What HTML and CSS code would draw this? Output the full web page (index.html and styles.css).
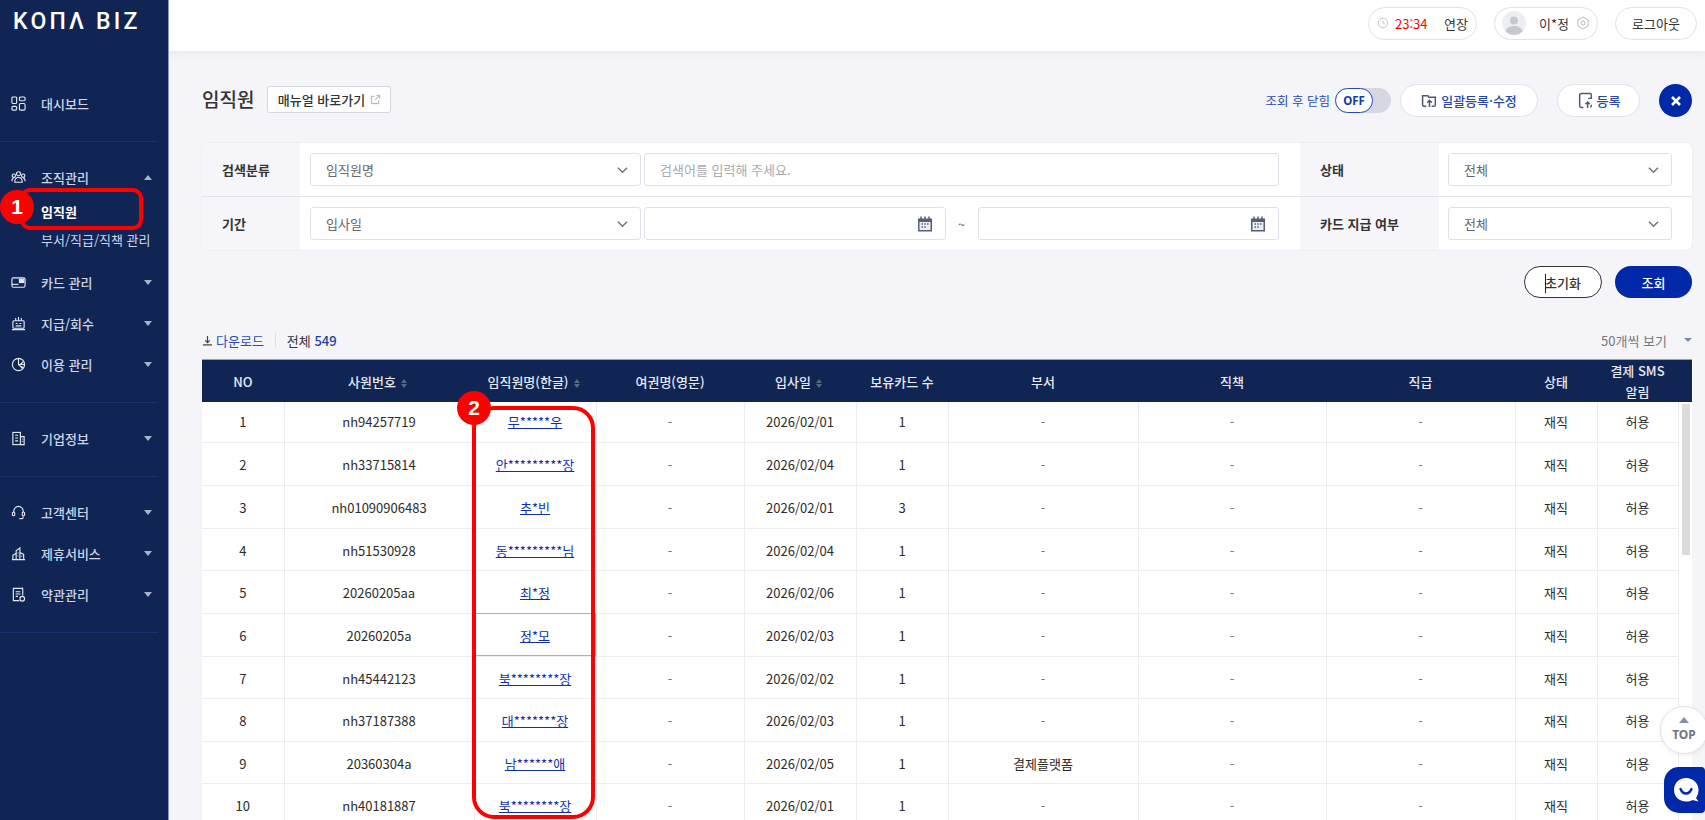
FILE: index.html
```html
<!DOCTYPE html>
<html lang="ko">
<head>
<meta charset="utf-8">
<title>KONA BIZ</title>
<link rel="stylesheet" href="styles.css">
</head>
<body>
<div class="app">
  <aside class="sidebar">
    <div class="logo">KOΠΛ BIZ</div>
    <nav>
      <ul class="group g-first">
        <li class="item"><svg class="ic" viewBox="0 0 16 16"><rect x="1" y="1" width="5" height="7" rx="1.2"/><rect x="1" y="11" width="5" height="4" rx="1.2"/><rect x="9" y="1" width="6" height="4" rx="1.2"/><rect x="9" y="8" width="6" height="7" rx="1.2"/></svg><span>대시보드</span></li>
      </ul>
      <ul class="group">
        <li class="item"><svg class="ic" viewBox="0 0 16 16"><circle cx="8" cy="4" r="2.2"/><circle cx="3" cy="6" r="1.8"/><circle cx="13" cy="6" r="1.8"/><path d="M4 13c0-3 1.5-5 4-5s4 2 4 5zM1 12c0-2 .6-3.5 2-3.5M15 12c0-2-.6-3.5-2-3.5"/></svg><span>조직관리</span><i class="tri up"></i></li>
        <li class="sub active">임직원</li>
        <li class="sub last">부서/직급/직책 관리</li>
        <li class="item"><svg class="ic" viewBox="0 0 16 16"><rect x="1" y="3" width="14" height="10" rx="1.5"/><rect x="9" y="4.500" width="4.500" height="3.500" fill="#dfe5f0"/><path d="M1 10h7"/></svg><span>카드 관리</span><i class="tri"></i></li>
        <li class="item"><svg class="ic" viewBox="0 0 16 16"><rect x="2" y="5" width="12" height="8" rx="1"/><path d="M1 14.5h14M5 2v3M8 1v4M11 2v3M5 8h2M9 8h2M5 10.500h6"/></svg><span>지급/회수</span><i class="tri"></i></li>
        <li class="item"><svg class="ic" viewBox="0 0 16 16"><circle cx="8" cy="8" r="6.5"/><path d="M8 1.5V8l4.500 4.500M8 8h6.500M10 8l3.500-3.500M10 10l3 1"/></svg><span>이용 관리</span><i class="tri"></i></li>
      </ul>
      <ul class="group">
        <li class="item"><svg class="ic" viewBox="0 0 16 16"><rect x="2" y="1.5" width="8" height="13"/><path d="M10 6h4v8.500h-4M4.500 4.500h3M4.500 7.500h3M4.500 10.500h3M11.500 8.500h1M11.500 11h1"/></svg><span>기업정보</span><i class="tri"></i></li>
      </ul>
      <ul class="group">
        <li class="item"><svg class="ic" viewBox="0 0 16 16"><path d="M3 8V6.500a5 5 0 0 1 10 0V8M13 12v1a1.500 1.500 0 0 1-1.500 1.500H9"/><rect x="1.500" y="7.500" width="2.500" height="4" rx="1.2"/><rect x="12" y="7.500" width="2.500" height="4" rx="1.2"/></svg><span>고객센터</span><i class="tri"></i></li>
        <li class="item"><svg class="ic" viewBox="0 0 16 16"><path d="M1 14.500h14M2 14.500V10l3-2M5.500 14.500V5l4-3v12.500M9.500 7l4 2v5.500M7.500 7v1M7.500 10v1M11.500 10.500v1"/></svg><span>제휴서비스</span><i class="tri"></i></li>
        <li class="item"><svg class="ic" viewBox="0 0 16 16"><path d="M9 14.500H2.500v-13h10V9M5 5h5M5 7.500h5M5 10h2.500"/><circle cx="12" cy="12.500" r="2.500"/></svg><span>약관관리</span><i class="tri"></i></li>
      </ul>
    </nav>
  </aside>

  <div class="main">
    <header class="topbar">
      <div class="pill timer">
        <svg class="clock" viewBox="0 0 12 12"><circle cx="6" cy="6" r="4.800"/><path d="M6 3.200V6l2 1.200"/></svg>
        <span class="time">23:34</span><span class="extend">연장</span>
      </div>
      <div class="pill user">
        <svg class="avatar" viewBox="0 0 24 24"><circle cx="12" cy="12" r="12" fill="#eeeef2"/><circle cx="12" cy="9.500" r="4" fill="#c6c8cf"/><path d="M3.500 20.500c1-4 4.500-5.500 8.500-5.500s7.500 1.500 8.500 5.500a12 12 0 0 1-17 0z" fill="#c6c8cf"/></svg>
        <span class="uname">이*정</span>
        <svg class="gear" viewBox="0 0 14 14"><path d="M7 1l5.200 3v6L7 13 1.800 10V4z"/><circle cx="7" cy="7" r="2"/></svg>
      </div>
      <button class="pill logout">로그아웃</button>
    </header>

    <section class="content">
      <div class="title-row">
        <h1>임직원</h1>
        <button class="manual">매뉴얼 바로가기
          <svg viewBox="0 0 12 12"><path d="M9.500 7v3.500h-8v-8H5M7 1.500h3.500V5M10.500 1.500 5.500 6.500"/></svg>
        </button>
        <div class="title-actions">
          <span class="close-label">조회 후 닫힘</span>
          <div class="toggle"><span class="knob">OFF</span></div>
          <button class="act bulk"><svg viewBox="0 0 16 16"><path class="dk" d="M5 13.500H3a1.500 1.500 0 0 1-1.500-1.500V3.500h5l1 1.500h6V12a1.500 1.500 0 0 1-1.500 1.500h-2"/><path class="dk" d="M8 14V8M5.800 10 8 7.800l2.200 2.200"/></svg>일괄등록·수정</button>
          <button class="act reg"><svg viewBox="0 0 16 16"><path class="dk" d="M6 14.500H4a1.500 1.500 0 0 1-1.500-1.500V3A1.500 1.500 0 0 1 4 1.500h8A1.500 1.500 0 0 1 13.500 3v3H10.500M13.500 12v1a1.500 1.500 0 0 1-1 1.400"/><path class="dk" d="M10 15V9.500M8 11.500l2-2 2 2"/></svg>등록</button>
          <button class="x" aria-label="닫기"><svg viewBox="0 0 12 12"><path d="M2 2l8 8M10 2l-8 8"/></svg></button>
        </div>
      </div>

      <div class="filter">
        <div class="f-label">검색분류</div>
        <div class="f-cell">
          <div class="ctl sel wide">임직원명<svg class="chev" viewBox="0 0 12 8"><path d="M1 1.500 6 6.500l5-5"/></svg></div>
          <div class="ctl ph fill">검색어를 입력해 주세요.</div>
        </div>
        <div class="f-label">상태</div>
        <div class="f-cell">
          <div class="ctl sel fill">전체<svg class="chev" viewBox="0 0 12 8"><path d="M1 1.500 6 6.500l5-5"/></svg></div>
        </div>
        <div class="f-label">기간</div>
        <div class="f-cell">
          <div class="ctl sel wide">입사일<svg class="chev" viewBox="0 0 12 8"><path d="M1 1.500 6 6.500l5-5"/></svg></div>
          <div class="ctl date"><svg class="cal" viewBox="0 0 16 16"><path d="M1 2.500h14V15.500H1z" fill="#565f73"/><path d="M4 .5v3M8 .5v3M12 .5v3" stroke="#565f73" stroke-width="1.500"/><rect x="2.500" y="6" width="11" height="8" fill="#eceef2"/><path d="M4.500 8h1.500M7.300 8h1.500M10 8h1.500M4.500 11h1.500M7.300 11h1.500" stroke="#565f73" stroke-width="1.500"/></svg></div>
          <span class="tilde">~</span>
          <div class="ctl date"><svg class="cal" viewBox="0 0 16 16"><path d="M1 2.500h14V15.500H1z" fill="#565f73"/><path d="M4 .5v3M8 .5v3M12 .5v3" stroke="#565f73" stroke-width="1.500"/><rect x="2.500" y="6" width="11" height="8" fill="#eceef2"/><path d="M4.500 8h1.500M7.300 8h1.500M10 8h1.500M4.500 11h1.500M7.300 11h1.500" stroke="#565f73" stroke-width="1.500"/></svg></div>
        </div>
        <div class="f-label">카드 지급 여부</div>
        <div class="f-cell">
          <div class="ctl sel fill">전체<svg class="chev" viewBox="0 0 12 8"><path d="M1 1.500 6 6.500l5-5"/></svg></div>
        </div>
      </div>

      <div class="search-row">
        <button class="reset">초기화<i class="ibeam"></i></button>
        <button class="search">조회</button>
      </div>

      <div class="toolbar">
        <svg class="dl" viewBox="0 0 12 12"><path d="M6 1v7M3.500 5.800 6 8.300l2.500-2.500M1 10.800h10"/></svg>
        <a class="dl-link">다운로드</a>
        <span class="sep"></span>
        <span class="total">전체 <b>549</b></span>
        <span class="per">50개씩 보기</span><i class="per-tri"></i>
      </div>

      <table class="grid">
        <colgroup><col class="c1"><col class="c2"><col class="c3"><col class="c4"><col class="c5"><col class="c6"><col class="c7"><col class="c8"><col class="c9"><col class="c10"><col class="c11"><col class="c12"></colgroup>
        <thead>
          <tr><th>NO</th><th>사원번호<i class="sort"></i></th><th>임직원명(한글)<i class="sort"></i></th><th>여권명(영문)</th><th>입사일<i class="sort"></i></th><th>보유카드 수</th><th>부서</th><th>직책</th><th>직급</th><th>상태</th><th class="two">결제 SMS<br>알림</th><th></th></tr>
        </thead>
        <tbody>
          <tr><td>1</td><td>nh94257719</td><td><a>무*****우</a></td><td class="d">-</td><td>2026/02/01</td><td>1</td><td class="d">-</td><td class="d">-</td><td class="d">-</td><td>재직</td><td>허용</td><td class="track" rowspan="10"><div class="thumb"></div></td></tr>
          <tr><td>2</td><td>nh33715814</td><td><a>안*********장</a></td><td class="d">-</td><td>2026/02/04</td><td>1</td><td class="d">-</td><td class="d">-</td><td class="d">-</td><td>재직</td><td>허용</td></tr>
          <tr><td>3</td><td>nh01090906483</td><td><a>추*빈</a></td><td class="d">-</td><td>2026/02/01</td><td>3</td><td class="d">-</td><td class="d">-</td><td class="d">-</td><td>재직</td><td>허용</td></tr>
          <tr><td>4</td><td>nh51530928</td><td><a>동*********님</a></td><td class="d">-</td><td>2026/02/04</td><td>1</td><td class="d">-</td><td class="d">-</td><td class="d">-</td><td>재직</td><td>허용</td></tr>
          <tr><td>5</td><td>20260205aa</td><td><a>최*정</a></td><td class="d">-</td><td>2026/02/06</td><td>1</td><td class="d">-</td><td class="d">-</td><td class="d">-</td><td>재직</td><td>허용</td></tr>
          <tr><td>6</td><td>20260205a</td><td class="focus"><a>정*모</a></td><td class="d">-</td><td>2026/02/03</td><td>1</td><td class="d">-</td><td class="d">-</td><td class="d">-</td><td>재직</td><td>허용</td></tr>
          <tr><td>7</td><td>nh45442123</td><td><a>북********장</a></td><td class="d">-</td><td>2026/02/02</td><td>1</td><td class="d">-</td><td class="d">-</td><td class="d">-</td><td>재직</td><td>허용</td></tr>
          <tr><td>8</td><td>nh37187388</td><td><a>대*******장</a></td><td class="d">-</td><td>2026/02/03</td><td>1</td><td class="d">-</td><td class="d">-</td><td class="d">-</td><td>재직</td><td>허용</td></tr>
          <tr><td>9</td><td>20360304a</td><td><a>남******애</a></td><td class="d">-</td><td>2026/02/05</td><td>1</td><td>결제플랫폼</td><td class="d">-</td><td class="d">-</td><td>재직</td><td>허용</td></tr>
          <tr><td>10</td><td>nh40181887</td><td><a>북********장</a></td><td class="d">-</td><td>2026/02/01</td><td>1</td><td class="d">-</td><td class="d">-</td><td class="d">-</td><td>재직</td><td>허용</td></tr>
        </tbody>
      </table>
    </section>
  </div>
</div>

<div class="note note-a"></div>
<div class="badge badge-a">1</div>
<div class="note note-b"></div>
<div class="badge badge-b">2</div>

<button class="top"><i></i>TOP</button>
<button class="chat" aria-label="채팅"><svg viewBox="0 0 25 24"><path d="M12 0c7 0 12.500 5 12.500 12 0 3-1 6-2.500 8l2.500 3.500-6-1.500c-2 1-4 1.500-6.500 1.500C5 23.500 0 18.500 0 12S5 0 12 0z" fill="#fff"/><path d="M6.500 11c1.500 3.500 3.500 4.500 5.500 4.500s4-1 5.500-4.500" fill="none" stroke="#0028a8" stroke-width="2.400" stroke-linecap="round"/></svg></button>
</body>
</html>
```
FILE: styles.css
```css
* { box-sizing: border-box; }
html, body { margin: 0; height: 100%; overflow: hidden; }
body { font-family: "Noto Sans CJK KR", "Noto Sans", sans-serif; font-size: 13px; color: #333; background: #f4f4f9; }
button { font-family: inherit; cursor: pointer; }
ul { list-style: none; margin: 0; padding: 0; }
.app { display: flex; height: 820px; overflow: hidden; }

/* sidebar */
.sidebar { width: 169px; flex: none; background: #112555; border-right: 1px solid #8d9ac0; color: #cdd6e6; }
.logo { height: 83px; padding: 7px 0 0 13px; font-family: "Roboto", sans-serif; font-weight: 500; font-size: 23px; line-height: 30px; letter-spacing: 3.200px; color: #fff; white-space: nowrap; }
.group { width: 158px; padding: 15px 0 17px; border-bottom: 1px solid #1b3270; }
.g-first { padding-top: 0; }
.item { display: flex; align-items: center; height: 41px; font-weight: 500; font-size: 13px; padding-left: 11px; }
.item span { margin-left: 15px; }
.ic { width: 15px; height: 15px; flex: none; fill: none; stroke: #e6ebf4; stroke-width: 1.200; }
.tri { margin-left: auto; margin-right: 6px; width: 0; height: 0; border-left: 4.500px solid transparent; border-right: 4.500px solid transparent; border-top: 5px solid #a9b3c8; }
.tri.up { border-top: 0; border-bottom: 5px solid #a9b3c8; }
.sub { height: 28px; line-height: 28px; padding-left: 41px; font-size: 13px; white-space: nowrap; margin-right: -6px; }
.sub.active { color: #fff; font-weight: 700; }
.sub.last { height: 35.500px; }

/* main */
.main { flex: 1; min-width: 0; display: flex; flex-direction: column; overflow: hidden; }
.topbar { height: 51px; flex: none; background: #fff; box-shadow: 0 2px 8px rgba(60, 60, 90, .08); display: flex; align-items: center; justify-content: flex-end; padding: 0 8px 5px 0; position: relative; z-index: 1; }
.pill { height: 33px; border: 1px solid #e0e1ea; border-radius: 17px; background: #fff; display: flex; align-items: center; font-size: 13px; color: #333; }
.timer { width: 109px; padding-left: 8px; }
.clock { width: 12px; height: 12px; fill: none; stroke: #c3c5cc; }
.time { margin-left: 6px; color: #f00; }
.extend { margin-left: auto; margin-right: 8px; }
.user { width: 104px; margin-left: 17px; padding-left: 7px; }
.avatar { width: 24px; height: 24px; }
.uname { margin-left: 13px; }
.gear { width: 14px; height: 14px; margin-left: 7px; fill: none; stroke: #b9bcc5; stroke-width: 1; stroke-linejoin: round; }
.logout { width: 82px; margin-left: 17px; justify-content: center; padding: 0; }

.content { flex: 1; min-height: 0; padding: 33px 13px 0 33px; overflow: hidden; }
.title-row { display: flex; align-items: center; height: 33px; }
h1 { margin: 0 0 3px; font-size: 19px; font-weight: 500; color: #333; line-height: 30px; }
.manual { margin: 0 0 3px 13px; width: 124px; height: 27px; padding: 0; background: #fff; border: 1px solid #d4d6e0; border-radius: 3px; font-size: 13px; font-weight: 500; color: #333; display: flex; align-items: center; justify-content: center; gap: 5px; }
.manual svg { width: 11px; height: 11px; fill: none; stroke: #a6a8b0; }
.title-actions { margin-left: auto; display: flex; align-items: center; }
.close-label { font-size: 12.500px; color: #2a4bb4; }
.toggle { margin-left: 5px; width: 56px; height: 25px; border-radius: 13px; background: #d6d7e3; }
.knob { display: flex; align-items: center; justify-content: center; width: 38px; height: 25px; border: 1px solid #2348b5; border-radius: 13px; background: #fff; color: #173aa8; font-size: 11.500px; font-weight: 700; font-family: "Noto Sans", sans-serif; }
.act { height: 33px; margin-left: 9px; background: #fff; border: 1px solid #e0e1ea; border-radius: 17px; color: #2647ad; font-size: 13px; font-weight: 500; display: flex; align-items: center; justify-content: center; gap: 3px; padding: 0; }
.act svg { width: 17px; height: 17px; }
.dk { fill: none; stroke: #4e5a70; stroke-width: 1.400; }
.bulk { width: 138px; }
.reg { width: 83px; margin-left: 19px; }
.x { width: 33px; height: 33px; margin-left: 19px; border: 0; padding: 0; border-radius: 50%; background: #0028a8; display: flex; align-items: center; justify-content: center; }
.x svg { width: 12px; height: 12px; fill: none; stroke: #fff; stroke-width: 2.600; }

/* filter */
.filter { margin-top: 26px; width: 1490px; display: grid; grid-template-columns: 98px 1000px 139px 253px; grid-template-rows: 53px 54px; background: #fff; border-radius: 6px; overflow: hidden; box-shadow: 0 0 0 1px #eeeef3; }
.f-label { background: #f6f6fa; display: flex; align-items: center; font-weight: 700; font-size: 13px; color: #333; padding-left: 20px; }
.f-label:nth-child(n+5), .f-cell:nth-child(n+5) { border-top: 1px solid #dfe1ea; }
.f-cell { display: flex; align-items: center; gap: 3px; padding: 0 21px 0 10px; }
.f-cell:nth-child(4), .f-cell:nth-child(8) { padding: 0 20px 0 9px; }
.ctl { height: 33px; background: #fff; border: 1px solid #dfe1ea; border-radius: 3px; display: flex; align-items: center; font-size: 13px; color: #666; padding-left: 15px; }
.wide { width: 331px; flex: none; }
.fill { flex: 1; }
.ph { color: #a8aab0; }
.chev { width: 11px; height: 8px; margin-left: auto; margin-right: 12px; fill: none; stroke: #6c7488; stroke-width: 1.600; }
.date { flex: 1; }
.cal { width: 16px; height: 16px; margin-left: auto; margin-right: 12px; }
.tilde { width: 26px; text-align: center; font-size: 12px; color: #555; }

.search-row { margin-top: 16px; display: flex; justify-content: flex-end; width: 1490px; gap: 13px; }
.reset, .search { height: 32px; border-radius: 16px; padding: 0; font-size: 13px; font-weight: 500; position: relative; }
.reset { width: 78px; border: 1px solid #333; background: #fff; color: #333; }
.search { width: 77px; border: 0; background: #0028a8; color: #fff; }
.ibeam { position: absolute; left: 20px; top: 7px; width: 1px; height: 19px; background: #222; }

/* toolbar */
.toolbar { margin-top: 32px; width: 1490px; height: 20px; display: flex; align-items: center; }
.dl { width: 11px; height: 11px; fill: none; stroke: #444; stroke-width: 1.300; }
.dl-link { margin-left: 3px; color: #2a4bb4; font-size: 13px; }
.sep { margin: 0 11px; width: 1px; height: 14px; background: #dcdde5; }
.total { font-size: 13px; color: #333; }
.total b { font-weight: 500; color: #1c3fa8; }
.per { margin-left: auto; font-size: 13px; color: #777; }
.per-tri { margin-left: 17px; width: 0; height: 0; border-left: 4px solid transparent; border-right: 4px solid transparent; border-top: 4.500px solid #7b8aa8; }

/* table */
.grid { margin-top: 9px; width: 1490px; border-collapse: collapse; table-layout: fixed; background: #fff; }
.c1 { width: 82px; } .c2 { width: 190px; } .c3 { width: 122px; } .c4 { width: 148px; } .c5 { width: 112px; } .c6 { width: 92px; } .c7 { width: 190px; } .c8 { width: 188px; } .c9 { width: 189px; } .c10 { width: 82px; } .c11 { width: 81px; } .c12 { width: 14px; }
th { height: 42px; background: #112555; color: #e6eaf2; font-size: 13px; font-weight: 500; text-align: center; padding: 0; border-top: 1px solid #9aa0ad; white-space: nowrap; }
.two { line-height: 21px; }
.sort { display: inline-block; margin: 0 3px 0 5px; width: 0; height: 9px; border-left: 3px solid transparent; border-right: 3px solid transparent; position: relative; vertical-align: -1px; }
.sort::before, .sort::after { content: ""; position: absolute; left: -3px; border-left: 3px solid transparent; border-right: 3px solid transparent; }
.sort::before { top: 0; border-bottom: 4px solid #5c6780; }
.sort::after { bottom: 0; border-top: 4px solid #5c6780; }
tbody tr { height: 43px; }
tbody tr:nth-child(3n+1), tbody tr:nth-child(9) { height: 42px; }
tbody tr:first-child { height: 40px; }
td { padding: 2px 0 0; text-align: center; font-size: 13px; color: #2b2b2b; border-bottom: 1px solid #ececf1; border-right: 1px solid #ececf1; white-space: nowrap; }
tbody tr:first-child td { padding-top: 0; }
td.d { color: #777; }
td a { color: #0f2fb0; text-decoration: underline; }
td.focus { outline: 1px solid #aeaeb4; outline-offset: -1px; }
tbody tr:first-child td.track { border: 0; border-right: 1px solid #f4f4f9; vertical-align: top; background: #fff; padding: 2px 2px 0 3px; }
.thumb { width: 8px; height: 151px; background: #dcdcdc; }

/* overlays */
.note { position: absolute; border: 4px solid #f00; }
.note-a { left: 20px; top: 188px; width: 123px; height: 42px; border-radius: 10px; }
.note-b { left: 472px; top: 406px; width: 123px; height: 413px; border-radius: 22px; }
.badge { position: absolute; width: 34px; height: 34px; border-radius: 50%; background: #f00; color: #fff; font-family: "Liberation Sans", sans-serif; font-weight: 700; font-size: 21px; display: flex; align-items: center; justify-content: center; }
.badge-a { left: 0; top: 190px; }
.badge-b { left: 457px; top: 391px; }
.top { position: absolute; left: 1660px; top: 706px; width: 48px; height: 48px; border-radius: 50%; border: 1px solid #e3e4ec; background: #fff; box-shadow: 0 1px 4px rgba(0, 0, 0, .08); color: #70757f; font-family: "Noto Sans", sans-serif; font-weight: 700; font-size: 12px; padding: 0; display: flex; flex-direction: column; align-items: center; justify-content: center; gap: 3px; }
.top i { width: 0; height: 0; border-left: 5.500px solid transparent; border-right: 5.500px solid transparent; border-bottom: 6px solid #8a8f9c; }
.chat { position: absolute; left: 1664px; top: 767px; width: 41px; height: 46px; border: 0; border-radius: 15px 4px 4px 15px; background: #0028a8; padding: 0 0 0 10px; display: flex; align-items: center; }
.chat svg { width: 25px; height: 24px; }
```
